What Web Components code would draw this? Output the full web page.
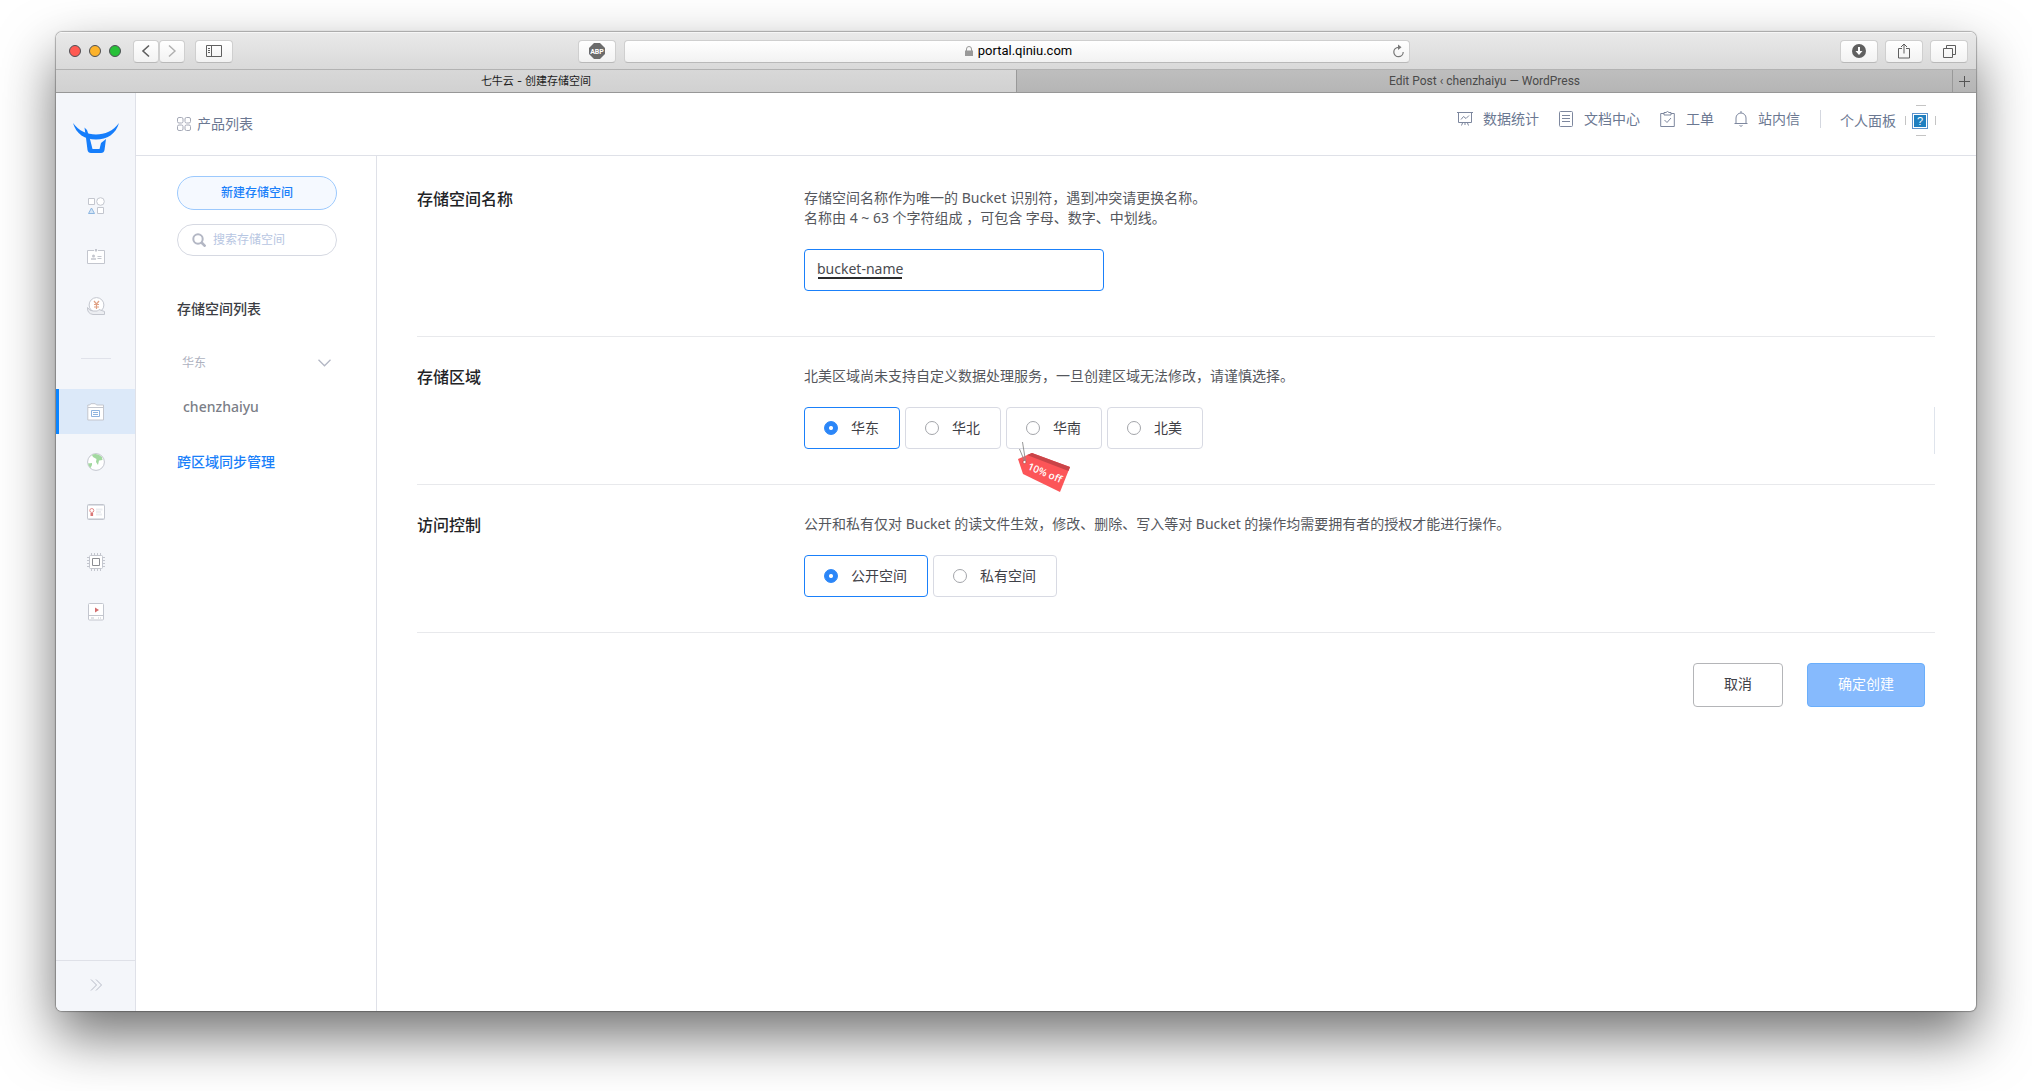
<!DOCTYPE html>
<html lang="zh-CN">
<head>
<meta charset="utf-8">
<title>七牛云 - 创建存储空间</title>
<style>
html, body { height: 100%; }
body {
  margin: 0; box-sizing: border-box; padding: 32px 56px 80px; background: #fff;
  display: flex; flex-direction: column; min-height: 100vh;
  font: 14px/20px "Noto Sans", "Noto Sans CJK SC", sans-serif; color: #4e5056;
}
</style>
</head>
<body>
<browser-window>
  <browser-toolbar slot="chrome" address="portal.qiniu.com"></browser-toolbar>
  <browser-tabs slot="chrome" current="七牛云 - 创建存储空间" other="Edit Post ‹ chenzhaiyu — WordPress"></browser-tabs>
  <product-rail slot="rail"></product-rail>
  <top-bar slot="top"></top-bar>
  <bucket-nav slot="side"></bucket-nav>
  <create-form></create-form>
</browser-window>

<script>
const define = (name, html, setup) => {
  const tpl = document.createElement('template');
  tpl.innerHTML = '<style>:host,*{box-sizing:border-box}button,input{font:inherit;color:inherit;margin:0}button{cursor:pointer}svg{display:block;flex:none;fill:none}a{color:inherit;text-decoration:none}</style>' + html;
  customElements.define(name, class extends HTMLElement {
    constructor() {
      super();
      this.attachShadow({ mode: 'open' }).append(tpl.content.cloneNode(true));
    }
    connectedCallback() { if (setup) setup(this, this.shadowRoot); }
  });
};

define('browser-window', `
<style>
:host { flex: 1; display: flex; flex-direction: column; min-height: 0; border-radius: 6px; background: #fff;
  box-shadow: 0 0 1px 1px rgba(0,0,0,.28), 0 25px 55px rgba(0,0,0,.56); }
.clip { flex: 1; min-height: 0; display: flex; flex-direction: column; border-radius: 6px; overflow: hidden; }
.app { flex: 1; min-height: 0; display: flex; }
.right { flex: 1; min-width: 0; display: flex; flex-direction: column; }
.row { flex: 1; min-height: 0; display: flex; }
main { flex: 1; min-width: 0; }
</style>
<div class="clip">
  <slot name="chrome"></slot>
  <div class="app">
    <slot name="rail"></slot>
    <div class="right">
      <slot name="top"></slot>
      <div class="row"><slot name="side"></slot><main><slot></slot></main></div>
    </div>
  </div>
</div>`);

define('tool-button', `
<style>
:host { display: block; width: 38px; height: 23px; }
button { width: 100%; height: 100%; padding: 0; border: 1px solid #cfcfcf; border-bottom-color: #b9b9b9; border-radius: 4px;
  background: linear-gradient(#fff, #f2f2f2); display: flex; align-items: center; justify-content: center; color: #5f5f5f; }
</style>
<button type="button"><slot></slot></button>`, (el, root) => {
  root.querySelector('button').setAttribute('aria-label', el.getAttribute('label'));
});

define('browser-toolbar', `
<style>
:host { display: flex; align-items: center; height: 38px; padding: 0 8px 0 13px; border-top: 1px solid #f6f6f6; border-bottom: 1px solid #b2b2b2;
  background: linear-gradient(#e9e9e9, #d9d9d9); }
.lights { display: flex; gap: 8px; margin-right: 12px; }
.lights i { width: 12px; height: 12px; border-radius: 50%; border: 1px solid; }
.r { background: #ff5a52; border-color: #e2453e; } .y { background: #fdb32b; border-color: #df9a23; } .g { background: #27c138; border-color: #1ca62b; }
.pair { display: flex; margin-right: 10px; } .pair tool-button { width: 26px; }
.mid { flex: 1; display: flex; justify-content: center; gap: 8px; min-width: 0; padding-right: 86px; }
.url { flex: 0 1 786px; height: 23px; border: 1px solid #cfcfcf; border-bottom-color: #b9b9b9; border-radius: 4px; background: linear-gradient(#fff, #f2f2f2);
  display: flex; align-items: center; padding: 0 5px; font: 13px/20px Roboto, sans-serif; color: #000; }
.url label { flex: 1; display: flex; justify-content: center; align-items: center; gap: 5px; padding-left: 15px; }
.url input { field-sizing: content; border: 0; padding: 0; background: none; outline: 0; }
.url button { border: 0; background: none; padding: 0; color: #777; }
.end { display: flex; gap: 7px; }
svg:not([stroke]) { stroke: currentColor; }
</style>
<div class="lights"><i class="r"></i><i class="y"></i><i class="g"></i></div>
<div class="pair">
  <tool-button label="后退"><svg width="10" height="14" stroke-width="1.6"><path d="M8 1.5 2 7l6 5.5"/></svg></tool-button>
  <tool-button label="前进"><svg width="10" height="14" stroke-width="1.4" style="color:#b0b0b0"><path d="M2 1.5 8 7l-6 5.5"/></svg></tool-button>
</div>
<tool-button label="边栏"><svg width="16" height="12"><path d="M.5.5h15v11H.5zM5.5 0v12M2 3.5h2M2 5.5h2M2 7.5h2"/></svg></tool-button>
<div class="mid">
  <tool-button label="ABP"><svg width="16" height="16" stroke="none"><path d="M5 0h6l5 5v6l-5 5H5l-5-5V5z" fill="#6c6c6c"/><text x="8" y="11" font-family="Roboto, sans-serif" font-weight="700" font-size="7" text-anchor="middle" fill="#fff">ABP</text></svg></tool-button>
  <div class="url">
    <label><svg width="8" height="10" stroke="none"><path d="M0 4.5h8V10H0z" fill="#999"/><path d="M1.5 5V3a2.500 2.500 0 0 1 5 0v2" stroke="#999"/></svg><input id="u" aria-label="地址" spellcheck="false"></label>
    <button type="button" aria-label="刷新"><svg width="11" height="14" stroke-width="1.2"><path d="M5.5 3.300a4.700 4.700 0 1 0 4.700 4.700"/><path d="M5 .5 8.500 3.300 5 6z" fill="currentColor" stroke="none"/></svg></button>
  </div>
</div>
<div class="end">
  <tool-button label="下载"><svg width="14" height="14" stroke="none"><circle cx="7" cy="7" r="7" fill="#606060"/><path d="M6 3h2v4h2.500L7 11 3.500 7H6z" fill="#fff"/></svg></tool-button>
  <tool-button label="共享"><svg width="12" height="16"><path d="M4 5.500H.5v9.500h11V5.500H8M6 10.500V1M3 4l3-3 3 3"/></svg></tool-button>
  <tool-button label="标签页"><svg width="13" height="13"><path d="M.5 3.500h9v9h-9zM3.500 3.500v-3h9v9h-3"/></svg></tool-button>
</div>`, (el, root) => { root.getElementById('u').value = el.getAttribute('address'); });

define('browser-tabs', `
<style>
:host { display: flex; height: 23px; border-bottom: 1px solid #979797; }
button { border: 0; padding: 1px 0 0; background: linear-gradient(#d8d8d8, #d1d1d1); color: #1d1d1d; font: 11px/21px Inter, "Noto Sans CJK SC", sans-serif; }
#a { flex: 0 0 50%; }
#b { flex: 1; font-size: 12px; font-family: Roboto, sans-serif; }
.off { background: linear-gradient(#bebebe, #b5b5b5); color: #4a4a4a; border-left: 1px solid #999; }
.plus { flex: 0 0 24px; display: flex; align-items: center; justify-content: center; }
svg { stroke: #555; }
</style>
<button type="button" id="a"></button><button type="button" class="off" id="b"></button>
<button type="button" class="off plus" aria-label="新标签页"><svg width="11" height="11"><path d="M5.500 0v11M0 5.500h11"/></svg></button>`, (el, root) => {
  root.getElementById('a').textContent = el.getAttribute('current');
  root.getElementById('b').textContent = el.getAttribute('other');
});

define('product-rail', `
<style>
:host { flex: 0 0 80px; display: flex; flex-direction: column; background: #f4f6fa; border-right: 1px solid #dfe1e8; }
.logo { display: flex; justify-content: center; padding: 30px 0 29px; }
nav { display: flex; flex-direction: column; gap: 5px; }
nav a { height: 45px; display: flex; align-items: center; justify-content: center; border-left: 3px solid transparent; padding-right: 2px; }
nav a.on { background: #dce9f9; border-left-color: #0a84ff; }
hr { width: 30px; height: 1px; border: 0; background: #e0e2ea; margin: 30px auto; }
.more { margin-top: auto; height: 51px; border: 0; border-top: 1px solid #dfe1e8; background: none; padding: 0 0 2px 2px; display: flex; justify-content: center; align-items: center; }
nav svg { stroke: #c3c6ce; }
</style>
<div class="logo"><svg width="46" height="31" viewBox="0 0 46 31"><g fill="#167efb"><path d="M0 0C6 8 14 11.500 23 11.500S40 8 46 0C43 11 34 16.500 23 16.500S3 11 0 0Z"/><path d="M11.500 4.500 14 7l3 9 2.500 10h7l1.500-6 5-4-1.500 11q-.5 3-3.500 3H18q-3 0-3.500-3L13 15Z"/></g></svg></div>
<nav aria-label="产品">
  <a href="#" aria-label="全部"><svg width="18" height="18"><path d="M1.500 1.500h6v6h-6zM10.500 10.500h6v6h-6z" fill="#fff"/><circle cx="13.500" cy="4.500" r="3.800" fill="#fff"/><path d="M1.500 16.500 4.500 11l3 5.500z" fill="#d5e5f5" stroke="#8db6e0"/></svg></a>
  <a href="#" aria-label="账号"><svg width="18" height="16"><path d="M.5 2.500h17v13H.5z" fill="#fff"/><path d="M7 2.500h4" stroke="#f4f6fa"/><path d="M9 1v2.500" stroke-width="2"/><circle cx="6.500" cy="8" r="1.500" fill="#c3c6ce" stroke="none"/><path d="M4 11h5" stroke-width="1.500"/><path d="M10.500 8.500h4M10.500 10.500h4"/></svg></a>
  <a href="#" aria-label="财务"><svg width="18" height="18"><circle cx="9.500" cy="8" r="7.400" fill="#fff"/><path d="M7 4l2.500 3L12 4M7 7.500h5M7 10h5M9.500 7v5" stroke="#e0a184" stroke-width="1.2"/><path d="M.5 10.500q2 3.500 5.500 3.500h4.500l1.500-1.500 5.500 2v3H6Q0 16.500.5 10.500Z" fill="#eceef2"/></svg></a>
</nav>
<hr>
<nav aria-label="服务">
  <a href="#" class="on" aria-label="对象存储"><svg width="18" height="18"><path d="M.8 3.500V2h2l1-1.300h4.500L9.500 2H16.500v15H.8z" fill="#fff"/><path d="M1 4.500h16"/><path d="M4.500 7.500h8v6h-8zM6 9.500h5M6 11.500h5" stroke="#8fb4de"/></svg></a>
  <a href="#" aria-label="CDN"><svg width="18" height="18"><circle cx="9" cy="9" r="8.400" fill="#fff"/><path d="M5 2q5-2.500 10 2l.5 3-3.500.5-1 4.500-2-3 .5-3-3.500-2zM1 10.500 5 10v2l-1.500 3Q1.500 13 1 10.500Z" fill="#a3d9a0" stroke="none"/></svg></a>
  <a href="#" aria-label="证书"><svg width="18" height="16"><rect x=".5" y=".5" width="17" height="15" rx="1" fill="#fff"/><path d="M1 14.500h16M1 1.500h16" stroke="#dde0e6"/><circle cx="4.800" cy="6.500" r="2" stroke="#e38a8a"/><path d="M4.800 9v3" stroke="#d97777" stroke-width="2.600"/><path d="M9 5.500h6.500M9 8h5M9 10.500h6" stroke="#eceef1" stroke-width="2"/></svg></a>
  <a href="#" aria-label="计算"><svg width="18" height="18"><path d="M4.500 0v18M7.500 0v18M10.500 0v18M13.500 0v18M0 4.500h18M0 7.500h18M0 10.500h18M0 13.500h18"/><rect x="2.500" y="2.500" width="13" height="13" rx="1" fill="#fff"/><path d="M5.500 5.500h7v7h-7z" stroke="#8b8d92"/></svg></a>
  <a href="#" aria-label="直播"><svg width="16" height="18"><rect x=".5" y=".5" width="15" height="16.500" rx="1" fill="#fff"/><path d="M1 12.500h14M3 15h3M10 15h1M12 15h1"/><path d="M7 4.500 11 7l-4 2.500z" fill="#d36e6e" stroke="none"/></svg></a>
</nav>
<button type="button" class="more" aria-label="展开"><svg width="13" height="12" stroke="#b6bac6"><path d="M1 .5 6.500 6 1 11.500M6 .5 11.500 6 6 11.500"/></svg></button>`);

define('top-bar', `
<style>
:host { flex: 0 0 63px; display: flex; align-items: center; justify-content: space-between; padding: 0 39px 0 41px; border-bottom: 1px solid #dfe1e8; color: #6b7892; }
a { display: flex; align-items: center; }
.home { gap: 6px; }
.links { display: flex; align-items: center; padding-bottom: 10px; }
.links a { gap: 10px; margin-right: 20px; }
.links svg { stroke: #7d879e; }
.sep { width: 1px; height: 18px; background: #d4d7df; margin-right: 19px; }
.links .me { margin: 4px 0 0; gap: 9px; }
</style>
<a class="home" href="#"><svg width="14" height="14" stroke="#a5a9b6"><rect x=".5" y=".5" width="5.500" height="5.500" rx="1.500"/><rect x="8" y=".5" width="5.500" height="5.500" rx="1.500"/><rect x=".5" y="8" width="5.500" height="5.500" rx="1.500"/><rect x="8" y="8" width="5.500" height="5.500" rx="1.500"/></svg><span>产品列表</span></a>
<div class="links">
  <a href="#"><svg width="16" height="16"><path d="M0 1.500h16M1.500 1.500v10h13v-10M4 8.500l2.500-3 2.500 2 3-3M5.500 12l-1 2.500M10.500 12l1 2.500M8 12v2"/></svg><span>数据统计</span></a>
  <a href="#"><svg width="15" height="16"><rect x=".5" y=".5" width="13" height="15" rx="1"/><path d="M3 4.500h8M3 7.500h8M3 10.500h8"/></svg><span>文档中心</span></a>
  <a href="#"><svg width="16" height="16"><path d="M4 2.500H.7v13h13.600v-13H11M4 1.500h2l1.500-1 1.500 1h2v2.500H4zM4.500 9l2.500 2.500 4-4.500"/></svg><span>工单</span></a>
  <a href="#"><svg width="14" height="16"><path d="M.5 12.500h13M2 12.500V7a5 5 0 0 1 10 0v5.500M5.500 14.500q1.500 1.500 3 0M7 0v2"/></svg><span>站内信</span></a>
  <span class="sep"></span>
  <a class="me" href="#"><span>个人面板</span><svg width="32" height="32"><path d="M11 .5h10M11 30.500h10M.5 11v9M30.500 11v9" stroke="#c4c4c4"/><rect x="7.500" y="8.500" width="15" height="15" fill="#fff" stroke="#5e93cc"/><rect x="9" y="10" width="12" height="12" fill="#1f7fc0" stroke="none"/><text x="15" y="20" font-family="Liberation Sans, sans-serif" font-size="11" text-anchor="middle" fill="#fff" stroke="none">?</text></svg></a>
</div>`);

define('bucket-nav', `
<style>
:host { flex: none; width: 241px; padding: 20px 39px 0 41px; border-right: 1px solid #dfe1e8; display: flex; flex-direction: column; }
.new { height: 34px; border: 1px solid #9cc9fd; border-radius: 17px; background: #f5f9ff; color: #1a80fa; font-size: 12px; font-weight: 500; padding: 0; }
.search { margin-top: 14px; height: 32px; border: 1px solid #d6d9e2; border-radius: 16px; display: flex; align-items: center; gap: 7px; padding: 0 14px; }
.search input { flex: 1; min-width: 0; border: 0; padding: 0; outline: 0; background: none; font-size: 12px; }
.search input::placeholder { color: #b7c6e2; opacity: 1; }
h2 { margin: 43px 0 0; font-size: 14px; font-weight: 500; color: #3c3e44; }
.group { margin-top: 34px; height: 20px; display: flex; justify-content: space-between; align-items: center; border: 0; background: none; padding: 0 6px 0 5px; font-size: 12px; color: #aeb2bf; }
.bucket { margin-top: 24px; padding-left: 6px; color: #7b7e87; font-weight: 500; }
.sync { margin-top: 35px; color: #1a80fa; font-weight: 500; }
</style>
<button type="button" class="new">新建存储空间</button>
<label class="search"><svg width="14" height="14" stroke="#b3b7c4" stroke-width="2"><circle cx="6" cy="6" r="4.700"/><path d="m9.500 9.500 4 4" stroke-width="2.600"/></svg><input type="text" placeholder="搜索存储空间"></label>
<h2>存储空间列表</h2>
<button type="button" class="group"><span>华东</span><svg width="13" height="8" stroke="#b3b7c4" stroke-width="1.300"><path d="M.5.8 6.500 6.800 12.500.8"/></svg></button>
<a class="bucket" href="#">chenzhaiyu</a>
<a class="sync" href="#">跨区域同步管理</a>`);

define('form-row', `
<style>
:host { display: flex; border-bottom: 1px solid #e8e9ec; padding: 29px 0 35px; }
:host([roomy]) { padding: 32px 0 45px; }
h1 { flex: 0 0 387px; margin: 0; font-size: 16px; line-height: 22px; font-weight: 500; color: #222326; }
.body { flex: 1; min-width: 0; display: flex; flex-direction: column; gap: 21px; align-items: flex-start; }
.field { align-self: stretch; }
:host([edge]) .field { margin-bottom: -5px; padding-bottom: 5px; border-right: 1px solid #dfe4ec; }
</style>
<h1></h1><div class="body"><slot name="hint"></slot><div class="field"><slot></slot></div></div>`, (el, root) => {
  root.querySelector('h1').textContent = el.getAttribute('heading');
});

define('sale-tag', `
<style>:host { display: block; pointer-events: none; }</style>
<svg width="54" height="52" viewBox="0 0 54 52"><path d="M0 17 14 11 52 25 42 50 5 32Z" fill="#fc5558"/><path d="M14 11 52 25 50.500 29 9 13Z" fill="#c94448"/><circle cx="6.500" cy="20" r="1.600" fill="#fff" stroke="#a33" stroke-width=".6"/><path d="M6.500 19 1.500 7M7.500 19 4.500 0" stroke="#8b8b8b" stroke-width=".9"/><text transform="translate(9 27) rotate(23)" font-family="Open Sans, sans-serif" font-size="10" font-weight="600" fill="#fff">10% off</text></svg>`);

define('choice-group', `
<style>
:host { display: block; }
fieldset { border: 0; margin: 0; padding: 0; min-width: 0; display: flex; gap: 5px; }
label { position: relative; height: 42px; display: flex; align-items: center; gap: 13px; padding: 0 20px 0 19px; border: 1px solid #d8dae3; border-radius: 4px; color: #3f4147; cursor: pointer; }
label:has(:checked) { border-color: #1a80fa; }
input { appearance: none; width: 14px; height: 14px; border: 1px solid #a3a5aa; border-radius: 50%; background: #fff; }
input:checked { border-color: #2b86f8; background: radial-gradient(circle, #fff 0 1.500px, #2b86f8 2.500px); }
sale-tag { position: absolute; left: 11px; top: 34px; z-index: 1; }
</style>
<fieldset></fieldset>`, (el, root) => {
  const set = root.querySelector('fieldset');
  set.setAttribute('aria-label', el.getAttribute('name'));
  el.getAttribute('options').split('|').forEach((text, i) => {
    const label = document.createElement('label');
    label.innerHTML = '<input type="radio" name="choice"><span></span>';
    label.lastChild.textContent = text;
    label.firstChild.checked = i === 0;
    if (text === el.getAttribute('sale')) label.append(document.createElement('sale-tag'));
    set.append(label);
  });
});

define('create-form', `
<style>
:host { display: block; padding: 0 41px 0 40px; }
p { margin: 0; color: #55575d; }
.name { display: block; width: 300px; height: 42px; border: 1px solid #1a80fa; border-radius: 4px; padding: 0 12px 3px; outline: 0; color: #4a4b50;
  background: linear-gradient(#2a2a2a, #2a2a2a) 13px 27px / 84px 2px no-repeat #fff; }
.actions { display: flex; justify-content: flex-end; gap: 24px; padding: 30px 10px 0 0; }
.actions button { height: 44px; padding: 0 30px 2px; border: 1px solid #b4b5b8; border-radius: 4px; background: #fff; color: #3f4147; }
.actions .ok { border-color: #6aaefb; background: #86bafd; color: #fff; }
</style>
<form-row roomy heading="存储空间名称">
  <p slot="hint">存储空间名称作为唯一的 Bucket 识别符，遇到冲突请更换名称。<br>名称由 4 ~ 63 个字符组成 ，可包含 字母、数字、中划线。</p>
  <input class="name" type="text" aria-label="存储空间名称" value="bucket-name" spellcheck="false">
</form-row>
<form-row edge heading="存储区域">
  <p slot="hint">北美区域尚未支持自定义数据处理服务，一旦创建区域无法修改，请谨慎选择。</p>
  <choice-group name="存储区域" options="华东|华北|华南|北美" sale="华南"></choice-group>
</form-row>
<form-row heading="访问控制">
  <p slot="hint">公开和私有仅对 Bucket 的读文件生效，修改、删除、写入等对 Bucket 的操作均需要拥有者的授权才能进行操作。</p>
  <choice-group name="访问控制" options="公开空间|私有空间"></choice-group>
</form-row>
<div class="actions"><button type="button">取消</button><button type="button" class="ok">确定创建</button></div>`);
</script>
</body>
</html>
